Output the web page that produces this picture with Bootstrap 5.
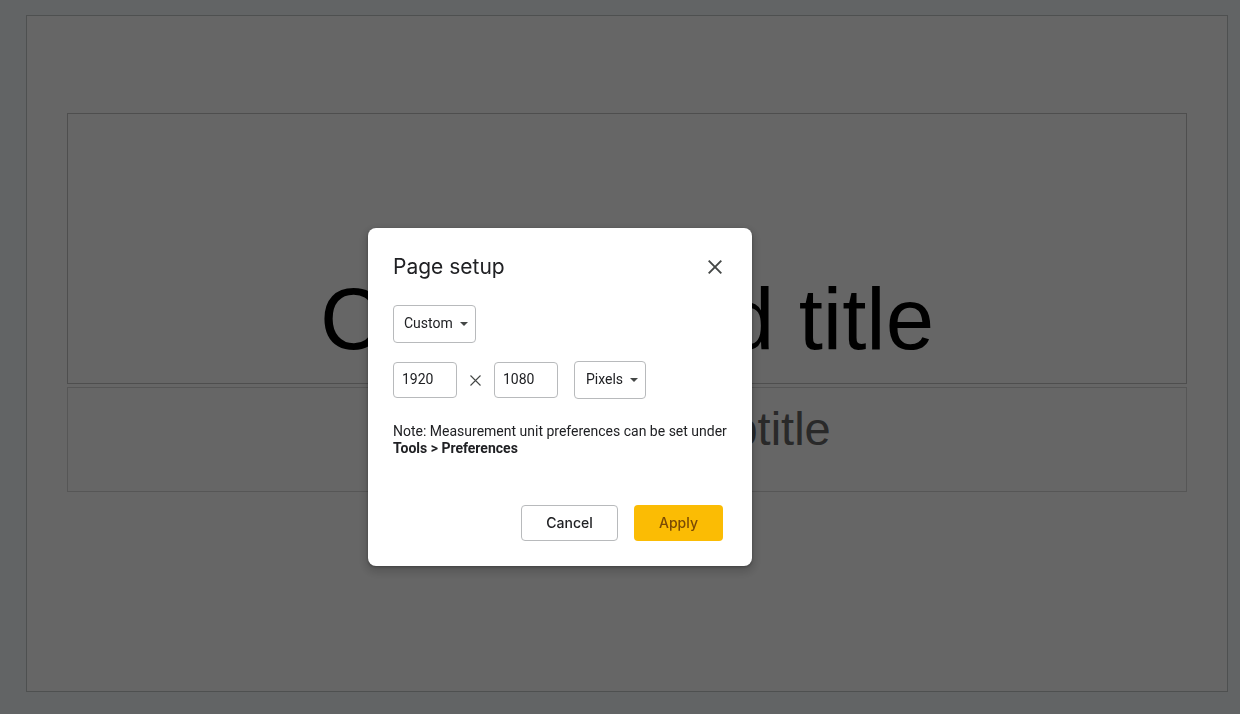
<!DOCTYPE html>
<html lang="en">
<head>
<meta charset="utf-8">
<meta name="viewport" content="width=device-width, initial-scale=1">
<title>Page setup</title>
<link href="https://cdn.jsdelivr.net/npm/bootstrap@5.3.0/dist/css/bootstrap.min.css" rel="stylesheet">
<style>
  body { background: #f6f9fd; font-family: Roboto, sans-serif; font-size: 14px; color: #202124; }
  .workspace { padding: 15px 12px 22px 26px; overflow: hidden; }
  .slide { background: #fff; border: 1px solid #c4c7c8; padding: 97px 40px 0; font-family: "Liberation Sans", Arial, sans-serif; text-align: center; line-height: 1; }
  .slide-title, .slide-subtitle { border: 1px solid #c4c4c4; }
  .slide-title { height: 271px; font-size: 87px; color: #000; padding-bottom: 21px; }
  .slide-subtitle { height: 105px; font-size: 47px; color: #666; margin-top: 3px; padding-top: 17px; border-color: #d8d8d8; }
  .modal-backdrop { --bs-backdrop-opacity: .6; }
  .setup-layer { padding-right: 120px; }
  .setup-dialog { max-width: 384px; margin-top: 228px; }
  .setup-content { border: 0; border-radius: 8px; padding: 25px; box-shadow: 0 4px 8px 3px rgba(0,0,0,.15), 0 1px 3px rgba(0,0,0,.3); color: #202124; }
  .setup-title { font-family: Inter, sans-serif; font-size: 21px; line-height: 28px; font-weight: 400; }
  .close-button { width: 24px; height: 24px; color: #444746; }
  .setup-select { width: 83px; height: 38px; padding: 0 20px 2px 10px; font-size: 14px; color: #202124; border: 1px solid #b8babc; border-radius: 4px;
    background-image: url("data:image/svg+xml,%3Csvg xmlns='http://www.w3.org/2000/svg' viewBox='0 0 8 4'%3E%3Cpath d='M0 0h8L4 4z' fill='%23444746'/%3E%3C/svg%3E"); background-size: 8px 4px; background-position: right 7px center; }
  .unit-select { width: 72px; padding-left: 11px; }
  .setup-input { width: 64px; height: 36px; padding: 0 8px 2px; font-size: 14px; color: #202124; border: 1px solid #b8babc; border-radius: 4px; }
  .size-row { margin-top: 18px; }
  .times-sign { margin: 0 13px; }
  .setup-note { line-height: 17px; }
  .setup-actions { padding-right: 4px; }
  .setup-button { height: 36px; padding: 0 0 2px; font-family: Inter, sans-serif; font-size: 14px; font-weight: 500; border-radius: 4px; }
  .cancel-button { width: 97px; border-color: #b8babc; color: #202124; }
  .apply-button { width: 89px; background: #fbbc04; color: #7a4a05; }
</style>
</head>
<body class="vh-100 overflow-hidden">
<main class="workspace vh-100">
  <section class="slide h-100">
    <div class="slide-title d-flex align-items-end justify-content-center">Click to add title</div>
    <div class="slide-subtitle">Click to add subtitle</div>
  </section>
</main>

<div class="modal-backdrop show"></div>
<div class="modal d-block setup-layer" role="dialog" aria-modal="true" aria-labelledby="setupTitle">
  <div class="modal-dialog setup-dialog mb-0">
    <form class="modal-content setup-content">
      <div class="d-flex justify-content-between align-items-center">
        <h1 class="setup-title mb-0" id="setupTitle">Page setup</h1>
        <button type="button" class="btn p-0 border-0 d-flex align-items-center justify-content-center close-button" aria-label="Close">
          <svg width="14" height="14" viewBox="0 0 14 14" fill="none" stroke="currentColor" stroke-width="1.9"><path d="M.7.7l12.6 12.6M13.3.7L.7 13.3"/></svg>
        </button>
      </div>
      <select class="form-select setup-select mt-4" aria-label="Page size">
        <option>Custom</option>
      </select>
      <div class="d-flex align-items-center size-row">
        <input class="form-control setup-input" type="text" value="1920" aria-label="Width">
        <svg class="times-sign" width="11" height="11" viewBox="0 0 11 11" fill="none" stroke="#444746" stroke-width="1.1"><path d="M.5.5l10 10M10.5.5l-10 10"/></svg>
        <input class="form-control setup-input" type="text" value="1080" aria-label="Height">
        <select class="form-select setup-select unit-select ms-3" aria-label="Unit">
          <option>Pixels</option>
        </select>
      </div>
      <p class="setup-note mt-4 mb-5">Note: Measurement unit preferences can be set under <b>Tools &gt; Preferences</b></p>
      <div class="d-flex justify-content-end gap-3 setup-actions">
        <button type="button" class="btn setup-button cancel-button">Cancel</button>
        <button type="submit" class="btn border-0 setup-button apply-button">Apply</button>
      </div>
    </form>
  </div>
</div>
<script src="https://cdn.jsdelivr.net/npm/bootstrap@5.3.0/dist/js/bootstrap.bundle.min.js"></script>
</body>
</html>
